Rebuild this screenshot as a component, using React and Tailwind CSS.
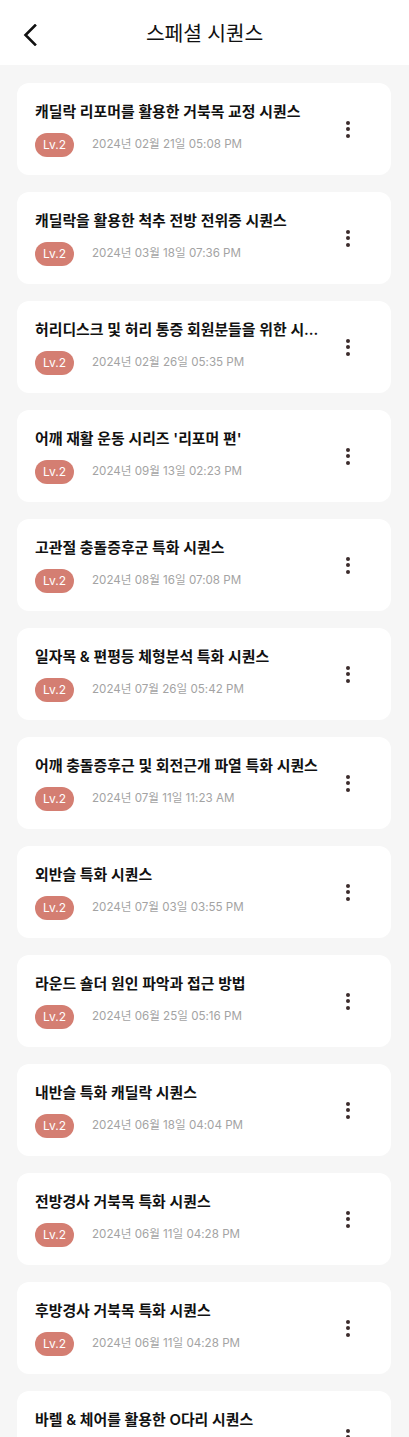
import React from "react";

const SEQUENCES = [
  { title: "캐딜락 리포머를 활용한 거북목 교정 시퀀스", date: "2024년 02월 21일 05:08 PM" },
  { title: "캐딜락을 활용한 척추 전방 전위증 시퀀스", date: "2024년 03월 18일 07:36 PM" },
  { title: "허리디스크 및 허리 통증 회원분들을 위한 시퀀스", date: "2024년 02월 26일 05:35 PM" },
  { title: "어깨 재활 운동 시리즈 '리포머 편'", date: "2024년 09월 13일 02:23 PM" },
  { title: "고관절 충돌증후군 특화 시퀀스", date: "2024년 08월 16일 07:08 PM" },
  { title: "일자목 & 편평등 체형분석 특화 시퀀스", date: "2024년 07월 26일 05:42 PM" },
  { title: "어깨 충돌증후근 및 회전근개 파열 특화 시퀀스", date: "2024년 07월 11일 11:23 AM" },
  { title: "외반슬 특화 시퀀스", date: "2024년 07월 03일 03:55 PM" },
  { title: "라운드 숄더 원인 파악과 접근 방법", date: "2024년 06월 25일 05:16 PM" },
  { title: "내반슬 특화 캐딜락 시퀀스", date: "2024년 06월 18일 04:04 PM" },
  { title: "전방경사 거북목 특화 시퀀스", date: "2024년 06월 11일 04:28 PM" },
  { title: "후방경사 거북목 특화 시퀀스", date: "2024년 06월 11일 04:28 PM" },
  { title: "바렐 & 체어를 활용한 O다리 시퀀스", date: "2024년 06월 04일 03:12 PM" },
];

const MoreDots = () => (
  <div className="flex flex-col items-center gap-[2.5px]">
    <span className="block w-[4px] h-[4px] rounded-full bg-[#3b2c2c]" />
    <span className="block w-[4px] h-[4px] rounded-full bg-[#3b2c2c]" />
    <span className="block w-[4px] h-[4px] rounded-full bg-[#3b2c2c]" />
  </div>
);

const SequenceCard = ({ title, date }) => (
  <div className="flex items-center bg-white rounded-[12px] h-[92px] pl-[18px]">
    <div className="flex-1 min-w-0 flex flex-col gap-[11px]">
      <p className="truncate text-[14.9px] leading-[20px] font-semibold text-[#111]">{title}</p>
      <div className="flex items-center gap-[18px]">
        <span className="flex items-center justify-center w-[39px] h-[24px] rounded-full bg-[#d47e72] text-white text-[12px] font-normal">
          Lv.2
        </span>
        <span className="text-[11.6px] text-[#a3a3a3]">{date}</span>
      </div>
    </div>
    <button className="flex items-center justify-center w-[48px] h-[40px] mr-[19px] shrink-0">
      <MoreDots />
    </button>
  </div>
);

export default function App() {
  return (
    <div
      className="w-[409px] min-h-screen bg-[#f6f6f6]"
      style={{ fontFamily: "Inter, 'Noto Sans CJK KR', sans-serif" }}
    >
      <header className="relative flex items-center justify-center h-[65px] bg-white">
        <button className="absolute left-[20px] top-[20px] w-[20px] h-[30px] flex items-center justify-center">
          <svg width="14" height="22" viewBox="0 0 14 22" fill="none">
            <path d="M12 1.5L2.5 11L12 20.5" stroke="#111" strokeWidth="2.6" strokeLinecap="square" />
          </svg>
        </button>
        <h1 className="text-[20.4px] leading-[28px] pt-[2px] text-[#111] tracking-[-0.2px]">스페셜 시퀀스</h1>
      </header>
      <div className="flex flex-col gap-[17px] px-[17px] pt-[18px] pb-[18px] w-[408px]">
        {SEQUENCES.map((s, i) => (
          <SequenceCard key={i} title={s.title} date={s.date} />
        ))}
      </div>
    </div>
  );
}
